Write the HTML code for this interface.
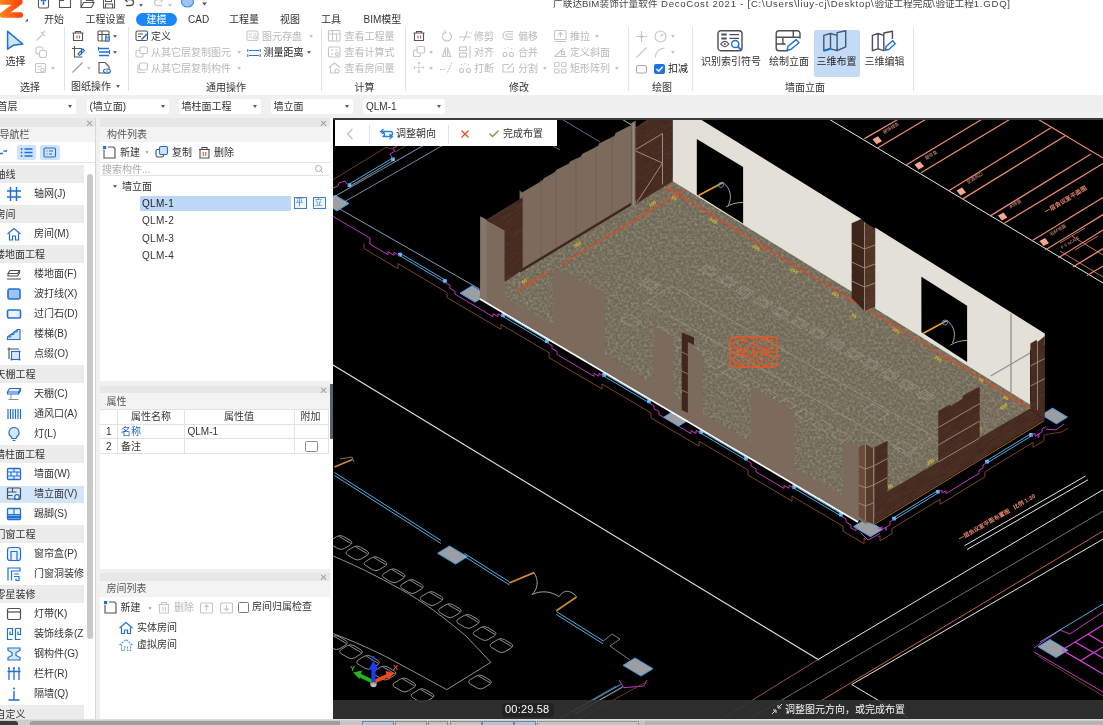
<!DOCTYPE html>
<html lang="zh-CN">
<head>
<meta charset="utf-8">
<title>广联达BIM装饰计量软件 DecoCost 2021</title>
<style>
html,body{margin:0;padding:0;}
body{width:1103px;height:725px;overflow:hidden;position:relative;background:#f0f0f0;font-family:"Liberation Sans","Noto Sans CJK SC",sans-serif;font-size:10px;color:#333;}
.a{position:absolute;}
.t{position:absolute;white-space:nowrap;font-size:10px;line-height:12px;height:12px;color:#333;filter:blur(0.35px);}
.g{color:#b9b9b9;}
.w{background:#fff;}
svg{position:absolute;overflow:visible;}
/* top */
#top{left:0;top:0;width:1103px;height:95px;background:#fff;}
.sep{position:absolute;width:1px;background:#e3e3e3;top:27px;height:64px;}
.dd{position:absolute;top:98.800px;height:15.700px;background:#fff;border-radius:2px;}
.dd span{position:absolute;left:3px;top:1px;font-size:10px;line-height:13px;white-space:nowrap;color:#333;filter:blur(0.35px);}
.dd i{position:absolute;right:4px;top:6.500px;width:0;height:0;border-left:2.500px solid transparent;border-right:2.500px solid transparent;border-top:3px solid #5a5a5a;}
.arr{position:absolute;width:0;height:0;border-left:2.5px solid transparent;border-right:2.5px solid transparent;border-top:3px solid #666;}
.arr.g{border-top-color:#c4c4c4;}
/* panels */
.ph{position:absolute;height:8.5px;background:#e7e7e7;}
.pt{position:absolute;height:16px;background:#f3f3f3;}
.x{position:absolute;width:7px;height:7px;}
.x:before,.x:after{content:"";position:absolute;left:3px;top:0.5px;width:0.8px;height:6.5px;background:#a0a0a0;}
.x:before{transform:rotate(45deg);}
.x:after{transform:rotate(-45deg);}
.nh{position:absolute;left:0;width:84px;height:18px;background:#ececec;}
.nh span,.ni span{position:absolute;white-space:nowrap;font-size:10px;line-height:12px;top:3.5px;filter:blur(0.35px);}
.ni{position:absolute;left:0;width:84px;height:20px;overflow:hidden;}
.ni span{left:34px;top:4.4px;}
.ni svg{left:6px;top:2px;}
</style>
</head>
<body>
<div id="top" class="a"></div>
<!-- title bar -->
<div class="t" style="left:553px;top:-2.500px;font-size:9.600px;color:#444;letter-spacing:0.74px;"><span style="letter-spacing:0.1px">广联达BIM装饰计量软件</span> DecoCost 2021 - [C:\Users\liuy-cj\Desktop\<span style="letter-spacing:0">验证工程完成</span>\<span style="letter-spacing:0">验证工程</span>1.GDQ]</div>
<!-- logo -->
<svg style="left:0;top:-6px" width="30" height="32" viewBox="0 0 30 32">
<defs><linearGradient id="lg" x1="0" y1="0" x2="1" y2="0"><stop offset="0" stop-color="#ff8f1c"/><stop offset="1" stop-color="#ff4310"/></linearGradient></defs>
<path d="M-3 8H19.800L2.500 21H20.300" fill="none" stroke="url(#lg)" stroke-width="5.600" stroke-linecap="round" stroke-linejoin="round"/>
<path d="M25.200 27.400h2.800v-2.800z" fill="#555"/>
</svg>
<!-- quick access -->
<svg style="left:36px;top:-4px" width="180" height="14" viewBox="0 0 180 14" fill="none" stroke="#555" stroke-width="1.1">
<rect x="2.5" y="1" width="10" height="11" rx="1.5"/><path d="M7.5 2v7M5 5l2.500 -2.600l2.500 2.600" stroke="#1f6fd6" stroke-width="1.6"/>
<path d="M23.500 4v7.500h11v-9h-4" /><path d="M23.500 1.500h4v3h-4z" fill="#555"/>
<path d="M45 11.500v-9h4l1.500 2h6.500v2M45 11.500l2.500 -5h10.500l-2.500 5z"/>
<path d="M67.500 2h9l2 2v8h-11zM69.500 2v3.500h6v-3.500M69.500 12v-4h7v4"/>
<path d="M90 9.500h4.500a3 3 0 0 0 0 -6h-5.500M91.500 1l-2.600 2.500l2.600 2.500" stroke-width="1.3"/>
<path d="M126 9.500h-4.500a3 3 0 0 1 0 -6h5.500M124.500 1l2.600 2.500l-2.600 2.500" stroke="#ccc" stroke-width="1.3"/>
<ellipse cx="151.500" cy="6" rx="6" ry="5" fill="#9cc7f5" stroke="#3d8be0"/>
<path d="M166 3.500h5" stroke-width="1.2"/><path d="M166 6.500l2.500 3l2.500 -3z" fill="#555" stroke="none"/>
</svg>
<div class="arr" style="left:139px;top:4px"></div>
<div class="arr g" style="left:168px;top:4px"></div>
<!-- tabs -->
<div class="t" style="left:44px;top:13.6px;">开始</div>
<div class="t" style="left:85.500px;top:13.6px;">工程设置</div>
<div class="a" style="left:135.500px;top:12.500px;width:41px;height:13px;border-radius:7px;background:#1787fb;"></div>
<div class="t" style="left:146.500px;top:13.6px;color:#fff;">建模</div>
<div class="t" style="left:188px;top:13.6px;">CAD</div>
<div class="t" style="left:229px;top:13.6px;">工程量</div>
<div class="t" style="left:280px;top:13.6px;">视图</div>
<div class="t" style="left:321px;top:13.6px;">工具</div>
<div class="t" style="left:363.500px;top:13.6px;">BIM模型</div>
<!-- ribbon separators -->
<div class="sep" style="left:64px"></div><div class="sep" style="left:128px"></div><div class="sep" style="left:321px"></div><div class="sep" style="left:405px"></div><div class="sep" style="left:628px"></div><div class="sep" style="left:692px"></div><div class="sep" style="left:913px"></div>
<!-- group: select -->
<svg style="left:4px;top:29px" width="22" height="24" viewBox="0 0 22 24"><path d="M3.600 2.300L18.800 15L9.300 16.300L3.600 20.100z" fill="#cfe3f8" stroke="#1b6fd0" stroke-width="1.5" stroke-linejoin="round"/></svg>
<div class="t" style="left:5.500px;top:56px;">选择</div>
<svg style="left:34px;top:29px" width="22" height="46" viewBox="0 0 22 46" fill="none" stroke="#c6c6c6" stroke-width="1.1">
<path d="M2.500 11.500l6 -6M7 3l4 4M8 5l3 -3"/>
<rect x="2" y="18" width="7" height="7" rx="2"/><rect x="5.500" y="21.500" width="7" height="7" rx="2" fill="#fff"/>
<rect x="1.500" y="34.500" width="10" height="9" rx="1"/><path d="M3.500 37.500h4M3.500 40h2"/><circle cx="8.500" cy="41" r="1.800"/>
</svg>
<div class="arr g" style="left:51px;top:67px"></div>
<div class="t" style="left:20px;top:82.1px;">选择</div>
<!-- group: drawing ops -->
<svg style="left:70px;top:29px" width="46" height="46" viewBox="0 0 46 46" fill="none" stroke="#555" stroke-width="1.1">
<path d="M2.500 4h11M5.500 4v-1.500h5v1.500M3.500 4v7.500h9v-7.500"/><path d="M7 6.500v3M9.500 6.500v3" stroke="#e05a3a"/>
<path d="M4.500 17v11h8M2 19.500h9.500v6"/><path d="M8 25l5 -5l1.500 1.500l-5 5z" stroke="#1f6fd6"/>
<path d="M2.500 43.500l10 -10" stroke="#999"/>
<rect x="28" y="2" width="11" height="10" rx="1"/><path d="M28 5.500h11M32 2v10M36 5.500v6.500"/><rect x="35.500" y="8" width="4" height="4" fill="#8fbdf0" stroke="#1f6fd6" stroke-width=".8"/>
<path d="M29 19.500h10M29 23h10M29 26.500h10" stroke="#1f6fd6" stroke-width="1.700"/><path d="M28.500 18v3.500M39.500 21v4" stroke="#1f6fd6"/>
<path d="M29 33.500h6l4 4v6.500h-10z"/><ellipse cx="37" cy="42" rx="3.500" ry="2" fill="#fff" stroke="#1f6fd6"/><circle cx="37" cy="42" r=".8" fill="#1f6fd6" stroke="none"/>
</svg>
<div class="arr g" style="left:87px;top:67px"></div>
<div class="arr" style="left:113px;top:35px"></div><div class="arr" style="left:113px;top:51px"></div>
<div class="t" style="left:71px;top:81.1px;">图纸操作</div><div class="arr" style="left:115.500px;top:85px"></div>
<!-- group: general ops -->
<svg style="left:135px;top:30px" width="14" height="12" viewBox="0 0 14 12" fill="none" stroke="#555" stroke-width="1.1"><rect x="1" y="1" width="11.500" height="9.500" rx="1.500"/><path d="M3 4h5M3 6.500h3"/><path d="M6.500 9.500l5.500 -5.500" stroke="#1f6fd6" stroke-width="1.600"/></svg>
<div class="t" style="left:151px;top:30.7px;">定义</div>
<svg style="left:135px;top:46px" width="14" height="28" viewBox="0 0 14 28" fill="none" stroke="#c6c6c6" stroke-width="1.100"><rect x="1" y="4.500" width="7" height="6.500" rx="1"/><rect x="5" y="1" width="7.500" height="6.500" rx="1" fill="#fff"/><path d="M3 18.500v8h7.500"/><rect x="4.500" y="17" width="8" height="7" rx="1.500" fill="#fff"/></svg>
<div class="t g" style="left:151px;top:47px;">从其它层复制图元</div><div class="arr g" style="left:236.500px;top:51px"></div>
<div class="t g" style="left:151px;top:63.3px;">从其它层复制构件</div><div class="arr g" style="left:236.500px;top:67px"></div>
<svg style="left:246px;top:30px" width="14" height="12" viewBox="0 0 14 12" fill="none" stroke="#c9c9c9" stroke-width="1.100"><rect x="1" y="1" width="11" height="9.500" rx="1.500"/><path d="M3 4h3M8 4h2.500M3 7h3"/><circle cx="9" cy="7.500" r="1.500"/></svg>
<div class="t g" style="left:262px;top:30.7px;">图元存盘</div><div class="arr g" style="left:308.500px;top:35px"></div>
<svg style="left:246.500px;top:47.500px" width="14" height="10" viewBox="0 0 14 10" fill="none" stroke="#2a78dc" stroke-width="1.100"><path d="M2 2.500h10M2 7.500h10"/><path d="M0.800 1v3M13.200 1v3M0.800 6v3M13.200 6v3" stroke="#555" stroke-width="0.900"/></svg>
<div class="t" style="left:263.500px;top:47px;color:#222;">测量距离</div><div class="arr" style="left:307px;top:51px"></div>
<div class="t" style="left:206px;top:82.1px;">通用操作</div>
<!-- group: calc -->
<svg style="left:327px;top:29px" width="15" height="46" viewBox="0 0 15 46" fill="none" stroke="#c6c6c6" stroke-width="1.100">
<rect x="1.500" y="1.500" width="11.500" height="10.500" rx="1"/><path d="M1.500 5h11.500M5.500 1.500v10.500M9.500 5v7"/>
<rect x="1.500" y="18" width="11.500" height="10" rx="1.500"/><path d="M4 21h2M8.500 21h2M4 25h2" /><circle cx="10" cy="25" r="1.500"/>
<path d="M2 38.500l5.500 -4.500l5.500 4.500M3.500 38v6h5"/><circle cx="10" cy="42" r="2"/>
</svg>
<div class="t g" style="left:344.500px;top:30.7px;">查看工程量</div>
<div class="t g" style="left:344.500px;top:47px;">查看计算式</div>
<div class="t g" style="left:344.500px;top:63.3px;">查看房间量</div>
<div class="t" style="left:354.500px;top:82.1px;">计算</div>
<!-- group: modify -->
<svg style="left:412px;top:29px" width="140" height="46" viewBox="0 0 140 46" fill="none" stroke="#c6c6c6" stroke-width="1.100">
<g stroke="#555"><path d="M1.500 4h11M4.500 4v-1.500h5v1.500M2.500 4v7.500h9v-7.500"/><path d="M6 6.500v3M8.500 6.500v3" stroke="#e05a3a"/></g>
<rect x="1.500" y="21" width="7" height="6.500" rx="1"/><rect x="5" y="17.500" width="7.500" height="6.500" rx="1" fill="#fff"/>
<path d="M7 33.500v10M2 38.500h10M7 33.500l-1.500 1.500M7 33.500l1.500 1.500M7 43.500l-1.500 -1.500M7 43.500l1.500 -1.500M2 38.500l1.500 -1.500M2 38.500l1.500 1.500M12 38.500l-1.500 -1.500M12 38.500l-1.500 1.500" stroke-dasharray="1.500 .8"/>
<path d="M37 3.500a4.500 4.500 0 1 1 -4 0M33 1l.5 3l-3 .5"/>
<path d="M30.500 27.500l3 -9v9zM38.500 27.500l-3 -9v9z"/>
<path d="M28 40.500h6M35.500 43.500l4.500 -10" stroke-dasharray="2 1"/>
<path d="M47 8h12M55.500 2l-4 10" /><path d="M57 4h3" stroke-dasharray="1 1"/>
<rect x="47.500" y="18" width="7" height="3.500"/><rect x="47.500" y="24" width="7" height="4"/><path d="M58 17v12"/>
<circle cx="49.500" cy="41.500" r="2"/><circle cx="56.500" cy="41.500" r="2"/><path d="M49.500 36v-1.500M56.500 36v-1.500M53 35v-1.500" stroke-dasharray="1 1"/>
<path d="M101 2.500h-6a4 4 0 0 0 0 8h6M101 5h-5.500a1.500 1.500 0 0 0 0 3h5.500"/>
<circle cx="93" cy="25.500" r="2"/><circle cx="99.500" cy="25.500" r="2"/><path d="M93 20v-1.500M99.500 20v-1.500M96 19v-1.500" stroke-dasharray="1 1"/>
<path d="M97 35.500h-6v7.500h10.500v-5M95.500 40l5.500 -5.500"/>
</svg>
<div class="arr g" style="left:428.500px;top:51px"></div><div class="arr g" style="left:428.500px;top:67px"></div>
<div class="t g" style="left:474px;top:30.7px;">修剪</div><div class="t g" style="left:474px;top:47px;">对齐</div><div class="t g" style="left:474px;top:63.3px;">打断</div>
<div class="t g" style="left:518px;top:30.7px;">偏移</div><div class="t g" style="left:518px;top:47px;">合并</div><div class="t g" style="left:518px;top:63.3px;">分割</div>
<div class="arr g" style="left:543px;top:67px"></div>
<svg style="left:553px;top:29px" width="15" height="46" viewBox="0 0 15 46" fill="none" stroke="#c6c6c6" stroke-width="1.100">
<rect x="1.500" y="1.500" width="11.500" height="9" rx="1"/><path d="M7.500 8.500v-5M5.500 5.500l2 -2l2 2M1.500 12.500h11.500"/>
<path d="M1.500 27.500h12M1.500 27.500l9 -8"/><rect x="8.500" y="22.500" width="3" height="3"/>
<rect x="1.500" y="33.500" width="4.500" height="4" rx="1"/><rect x="8.500" y="33.500" width="4.500" height="4" rx="1"/><rect x="1.500" y="40" width="4.500" height="4" rx="1"/><rect x="8.500" y="40" width="4.500" height="4" rx="1"/>
</svg>
<div class="t g" style="left:570px;top:30.7px;">推拉</div><div class="arr g" style="left:595px;top:35px"></div>
<div class="t g" style="left:570px;top:47px;">定义斜面</div>
<div class="t g" style="left:570px;top:63.3px;">矩形阵列</div><div class="arr g" style="left:615px;top:67px"></div>
<div class="t" style="left:509px;top:82.1px;">修改</div>
<!-- group: draw -->
<svg style="left:634px;top:29px" width="36" height="46" viewBox="0 0 36 46" fill="none" stroke="#c6c6c6" stroke-width="1.100">
<path d="M7.500 2v11M2 7.500h11"/><circle cx="7.500" cy="7.500" r="1" fill="#c6c6c6"/>
<circle cx="26.500" cy="7.500" r="5.500"/><path d="M26.500 7.500l2.500 -2.500"/>
<path d="M2.500 28.500l10 -10"/>
<path d="M21.500 28.500c0 -6 4 -9 9 -9.500"/>
<rect x="2.500" y="36.500" width="10" height="7.500" rx="1.500" stroke="#aaa"/>
</svg>
<div class="arr g" style="left:670.500px;top:35px"></div><div class="arr g" style="left:670.500px;top:51px"></div>
<div class="a" style="left:654px;top:64px;width:11px;height:10px;border-radius:2px;background:#1a73e8;"></div>
<svg style="left:654px;top:64px" width="11" height="10" viewBox="0 0 11 10"><path d="M2.500 5l2.200 2.200l4 -4.500" fill="none" stroke="#fff" stroke-width="1.500"/></svg>
<div class="t" style="left:668px;top:63.3px;color:#222;">扣减</div>
<div class="t" style="left:652px;top:82.1px;">绘图</div>
<!-- group: wall elevation -->
<div class="a" style="left:814px;top:29.500px;width:46px;height:47px;border-radius:2px;background:#c4dbf6;"></div>
<svg style="left:717px;top:29px" width="28" height="24" viewBox="0 0 28 24" fill="none" stroke="#4a4f58" stroke-width="1.400">
<rect x="1" y="1.700" width="24" height="20" rx="2.800"/><path d="M4.300 5.600h5.400M4.300 9.400h5.400" stroke-width="2"/><path d="M12.500 5.600h9.500M12.500 9.400h9.500" stroke-width="1.300"/><path d="M3.800 15c1.200 -1.800 2.500 -2.700 4 -2.700s2.800 .9 4 2.700c-1.200 1.800 -2.500 2.700 -4 2.700s-2.800 -.9 -4 -2.700z" stroke-width="1.200"/><circle cx="7.800" cy="15" r="1" fill="#4a4f58" stroke="none"/><circle cx="18.200" cy="15" r="3.600" fill="#fff" stroke="#1f6fd6" stroke-width="1.500"/><path d="M20.900 17.700l3.300 3.200" stroke="#1f6fd6" stroke-width="1.900"/>
</svg>
<div class="t" style="left:701px;top:56px;">识别索引符号</div>
<svg style="left:774px;top:29px" width="28" height="24" viewBox="0 0 28 24" fill="none" stroke="#4a4f58" stroke-width="1.400">
<path d="M14 21.700h-9a2.800 2.800 0 0 1 -2.800 -2.800v-14.400a2.800 2.800 0 0 1 2.800 -2.800h18.200a2.800 2.800 0 0 1 2.800 2.800v5"/><path d="M2.200 8.300h23.800M19.300 1.700v6.600M8.900 8.300v6.700M2.200 15h9.500"/><path d="M13 21.300l1 -4l8.200 -6.700l2.800 3.200l-8.200 6.700z" fill="#fff" stroke="#1f6fd6" stroke-width="1.400" stroke-linejoin="round"/>
</svg>
<div class="t" style="left:769px;top:56px;">绘制立面</div>
<svg style="left:822px;top:29px" width="26" height="24" viewBox="0 0 26 24" fill="none" stroke="#3f5878" stroke-width="1.400" stroke-linejoin="round">
<path d="M1.800 6.400L8.500 4.500V19.800L1.800 21.700zM8.500 4.500L15.100 6.400V21.700L8.500 19.800M15.100 6.400V3.600L23.700 1.700V17.900L15.100 21.700"/><path d="M1.800 21.700L8.500 19.800" stroke="#1f6fd6" stroke-width="2"/>
</svg>
<div class="t" style="left:816.500px;top:56px;color:#222;">三维布置</div>
<svg style="left:870px;top:29px" width="28" height="24" viewBox="0 0 28 24" fill="none" stroke="#4a4f58" stroke-width="1.400" stroke-linejoin="round">
<path d="M2.400 6.400L8.100 4.500V19.800L2.400 21.700zM8.100 4.500L13.800 6.400V21.700L8.100 19.800M13.800 6.400V4L22.400 2.200V10M19 2.900l3.400 -0.700"/><path d="M15.200 21.300l0.900 -3.700l6.500 -5.800l2.600 2.900l-6.500 5.800z" fill="#fff" stroke="#1f6fd6" stroke-width="1.400"/>
</svg>
<div class="t" style="left:864.500px;top:56px;">三维编辑</div>
<div class="t" style="left:785px;top:82.1px;">墙面立面</div>
<!-- dropdown bar -->
<div class="dd" style="left:-6px;width:81.500px"><span style="left:3.500px">首层</span><i></i></div>
<div class="dd" style="left:86.500px;width:82px"><span>(墙立面)</span><i></i></div>
<div class="dd" style="left:178.500px;width:82.500px"><span>墙柱面工程</span><i></i></div>
<div class="dd" style="left:270.500px;width:82px"><span>墙立面</span><i></i></div>
<div class="dd" style="left:363px;width:82px"><span>QLM-1</span><i></i></div>

<div class="a w" style="left:0;top:118px;width:96px;height:601.500px;"></div>
<div class="ph" style="left:0;top:118px;width:96px;"></div><div class="x" style="left:86px;top:119px;"></div>
<div class="pt" style="left:0;top:126.500px;width:96px;height:15.500px;"></div>
<div class="t" style="left:-0.500px;top:128.500px;color:#555;">导航栏</div>
<div class="a" style="left:0;top:162px;width:96px;height:1px;background:#e4e4e4;"></div>
<div class="a" style="left:17px;top:145px;width:19px;height:14.500px;border-radius:2px;background:#cfe4fb;"></div>
<div class="a" style="left:40px;top:145px;width:19.500px;height:14.500px;border-radius:2px;background:#cfe4fb;"></div>
<svg style="left:0;top:145px" width="60" height="15" viewBox="0 0 60 15" fill="none" stroke="#1f6fd6" stroke-width="1.300"><path d="M0 8.500h3M3.500 6h3.500" stroke="#1f6fd6"/><circle cx="21.500" cy="4" r=".9" fill="#1f6fd6" stroke="none"/><circle cx="21.500" cy="7.500" r=".9" fill="#1f6fd6" stroke="none"/><circle cx="21.500" cy="11" r=".9" fill="#1f6fd6" stroke="none"/><path d="M24.500 4h8M24.500 7.500h8M24.500 11h8"/><rect x="44" y="3" width="11.500" height="9" rx="1.200" stroke-width="1.100"/><path d="M46.500 6h1M49 6h4M46.500 9h1M49 9h3" stroke-width="1"/></svg>
<div class="nh" style="top:165px"><span style="left:-4.5px">轴线</span></div>
<div class="ni" style="top:184px;"><svg width="16" height="16" viewBox="0 0 16 16" fill="none"><path d="M4.500 1v14M10.500 1v14M1 5h14M1 11h14" stroke="#1f6fd6" stroke-width="1.500"/></svg><span>轴网(J)</span></div>
<div class="nh" style="top:205px"><span style="left:-4.5px">房间</span></div>
<div class="ni" style="top:224px;"><svg width="16" height="16" viewBox="0 0 16 16" fill="none"><path d="M1.500 8l6.500 -5.500l6.500 5.500M3.500 7.500v6.500h3v-4h3v4h3v-6.500" stroke="#1f6fd6" stroke-width="1.200"/></svg><span>房间(M)</span></div>
<div class="nh" style="top:245px"><span style="left:-5px">楼地面工程</span></div>
<div class="ni" style="top:264px;"><svg width="16" height="16" viewBox="0 0 16 16" fill="none"><path d="M4 4.500h9.500l-2 3h-9.500zM2 7.500v2.500h9.500l2 -3v-2.500M1 13h14" stroke="#4a4f58" stroke-width="1.100"/></svg><span>楼地面(F)</span></div>
<div class="ni" style="top:284px;"><svg width="16" height="16" viewBox="0 0 16 16" fill="none"><rect x="2" y="3" width="12" height="10" rx="1.500" stroke="#1f6fd6" stroke-width="1.600" fill="#9cc4f2"/></svg><span>波打线(X)</span></div>
<div class="ni" style="top:304px;"><svg width="16" height="16" viewBox="0 0 16 16" fill="none"><rect x="1.500" y="4" width="13" height="8" rx="1.500" stroke="#1f6fd6" stroke-width="1.600" fill="#eaf3fd"/></svg><span>过门石(D)</span></div>
<div class="ni" style="top:324px;"><svg width="16" height="16" viewBox="0 0 16 16" fill="none"><path d="M1.500 13.500v-2.500l10 -7.500h2.500v10z" stroke="#1f6fd6" stroke-width="1.100" fill="#d6e8fb"/><path d="M1.500 11h3.300v-2.500h3.200v-2.500h3.200v-2.500" stroke="#1f6fd6" stroke-width="1"/></svg><span>楼梯(B)</span></div>
<div class="ni" style="top:344px;"><svg width="16" height="16" viewBox="0 0 16 16" fill="none"><path d="M3 1.500v3M1.500 3h3M4.500 3h8.500M3 4.500v8.500" stroke="#4a4f58" stroke-width="1.100"/><rect x="5.500" y="5.500" width="8" height="8" stroke="#1f6fd6" stroke-width="1.100" fill="#d6e8fb"/><circle cx="5.500" cy="13.500" r="1" fill="#1f6fd6"/><circle cx="13.500" cy="13.500" r="1" fill="#1f6fd6"/><circle cx="13.500" cy="5.500" r="1" fill="#1f6fd6"/></svg><span>点缀(O)</span></div>
<div class="nh" style="top:365px"><span style="left:-4.5px">天棚工程</span></div>
<div class="ni" style="top:384px;"><svg width="16" height="16" viewBox="0 0 16 16" fill="none"><path d="M3.500 2.500h11l-2 3.500h-11zM1.500 6v2h11v-2M12.500 8l2 -3.500v-2" stroke="#1f6fd6" stroke-width="1.100" fill="#eaf3fd"/><path d="M5 8v5M2.500 13.500h10" stroke="#8a8f98" stroke-width="1"/></svg><span>天棚(C)</span></div>
<div class="ni" style="top:404px;"><svg width="16" height="16" viewBox="0 0 16 16" fill="none"><path d="M2 3v10M4.500 3v10M7 3v10M9.500 3v10M12 3v10M14.500 3v10" stroke="#1f6fd6" stroke-width="1.200"/></svg><span>通风口(A)</span></div>
<div class="ni" style="top:424px;"><svg width="16" height="16" viewBox="0 0 16 16" fill="none"><path d="M8 1.500a5 5 0 0 1 3 9l-1 2h-4l-1 -2a5 5 0 0 1 3 -9zM6.500 14.500h3" stroke="#1f6fd6" stroke-width="1.200" fill="#d6e8fb"/></svg><span>灯(L)</span></div>
<div class="nh" style="top:445px"><span style="left:-5px">墙柱面工程</span></div>
<div class="ni" style="top:464px;"><svg width="16" height="16" viewBox="0 0 16 16" fill="none"><rect x="1.500" y="2.500" width="13" height="11" rx="1" stroke="#1f6fd6" stroke-width="1.300" fill="#eaf3fd"/><path d="M1.500 6h13M1.500 10h13M8 2.500v3.500M5 6v4M11 6v4M8 10v3.500" stroke="#1f6fd6" stroke-width="1.100"/></svg><span>墙面(W)</span></div>
<div class="ni" style="top:484px;background:linear-gradient(#fff 0,#fff 2px,#d3e5fa 2px,#d3e5fa 19px,#fff 19px);"><svg width="16" height="16" viewBox="0 0 16 16" fill="none"><rect x="1.500" y="2" width="13" height="11" rx="1" stroke="#4a4f58" stroke-width="1.200"/><path d="M1.500 6h9M1.500 9.500h5M6.500 2v4" stroke="#4a4f58" stroke-width="1.100"/><circle cx="11" cy="11" r="2.300" stroke="#1f6fd6" stroke-width="1.200" fill="#fff"/><path d="M8 13.500h6" stroke="#1f6fd6" stroke-width="1.200"/></svg><span>墙立面(V)</span></div>
<div class="ni" style="top:504px;"><svg width="16" height="16" viewBox="0 0 16 16" fill="none"><rect x="1.500" y="2.500" width="13" height="11" rx="1" stroke="#1f6fd6" stroke-width="1.300" fill="#eaf3fd"/><path d="M1.500 8.500h13M8 2.500v6" stroke="#1f6fd6" stroke-width="1.100"/><path d="M2 11h12" stroke="#1f6fd6" stroke-width="3"/></svg><span>踢脚(S)</span></div>
<div class="nh" style="top:525px"><span style="left:-4.5px">门窗工程</span></div>
<div class="ni" style="top:544px;"><svg width="16" height="16" viewBox="0 0 16 16" fill="none"><rect x="1.500" y="1.500" width="13" height="13" rx="2.500" stroke="#1f6fd6" stroke-width="1.200" fill="#eaf3fd"/><path d="M5 14v-8.500h6v8.500" stroke="#1f6fd6" stroke-width="1.200"/></svg><span>窗帘盒(P)</span></div>
<div class="ni" style="top:564px;"><svg width="16" height="16" viewBox="0 0 16 16" fill="none"><path d="M2 14.500v-12.500h12v3h-8.500v9.500M8 8h5M8 10.500h5v4h-3v-2" stroke="#1f6fd6" stroke-width="1.200"/></svg><span>门窗洞装修</span></div>
<div class="nh" style="top:585px"><span style="left:-4.5px">零星装修</span></div>
<div class="ni" style="top:604px;"><svg width="16" height="16" viewBox="0 0 16 16" fill="none"><rect x="1.500" y="2.500" width="13" height="11" rx="1.500" stroke="#4a4f58" stroke-width="1.200"/><path d="M1.500 6h13" stroke="#4a4f58" stroke-width="1.200"/></svg><span>灯带(K)</span></div>
<div class="ni" style="top:624px;"><svg width="16" height="16" viewBox="0 0 16 16" fill="none"><path d="M1.500 2.500h5v6h-2.500v-3M1.500 2.500v11h5M9.500 2.500h5v6h-2.500v-3M9.500 2.500v11h5" stroke="#1f6fd6" stroke-width="1.200"/></svg><span>装饰线条(Z)</span></div>
<div class="ni" style="top:644px;"><svg width="16" height="16" viewBox="0 0 16 16" fill="none"><path d="M2 2h12v2.500l-4 2v3l4 2v2.500h-12v-2.500l4 -2v-3l-4 -2z" stroke="#1f6fd6" stroke-width="1.200" fill="#d6e8fb"/></svg><span>钢构件(G)</span></div>
<div class="ni" style="top:664px;"><svg width="16" height="16" viewBox="0 0 16 16" fill="none"><path d="M3 2v12M8 2v12M13 2v12M1.500 5.500h13" stroke="#1f6fd6" stroke-width="1.300"/><circle cx="3" cy="2" r=".9" fill="#1f6fd6"/><circle cx="8" cy="2" r=".9" fill="#1f6fd6"/><circle cx="13" cy="2" r=".9" fill="#1f6fd6"/></svg><span>栏杆(R)</span></div>
<div class="ni" style="top:684px;"><svg width="16" height="16" viewBox="0 0 16 16" fill="none"><path d="M8 5v8.500M2.500 14h11" stroke="#1f6fd6" stroke-width="1.400"/><circle cx="8" cy="2.500" r="1" fill="#1f6fd6"/></svg><span>隔墙(Q)</span></div>
<div class="nh" style="top:705px"><span style="left:-4.5px">自定义</span></div>
<div class="a" id="navborder" style="left:95px;top:118px;width:1px;height:601px;background:#d6d6d6;"></div>
<div class="a" style="left:86.500px;top:174px;width:6px;height:465px;border-radius:3px;background:#c9c9c9;"></div>

<div class="a" id="gapstrip" style="left:330px;top:118px;width:3px;height:601px;background:#fafafa;"></div>
<!-- component list panel -->
<div class="a w" style="left:99.500px;top:118px;width:230.500px;height:263px;"></div>
<div class="ph" style="left:99.500px;top:118px;width:230.500px;"></div><div class="x" style="left:320px;top:119px;"></div>
<div class="pt" style="left:99.500px;top:126.500px;width:230.500px;height:15.500px;"></div>
<div class="t" style="left:107px;top:128.500px;color:#555;">构件列表</div>
<svg style="left:102px;top:145px" width="112" height="15" viewBox="0 0 112 15" fill="none" stroke="#4a4f58" stroke-width="1.100">
<path d="M2 5v8h11v-9.500l-1.500 -1.500h-5.500"/><rect x="1" y="1" width="3.200" height="3.200" fill="#1f6fd6" stroke="none"/>
<rect x="54" y="4.500" width="7.500" height="7.500" rx="1.500"/><rect x="57.500" y="1.500" width="8" height="8" rx="1.500" fill="#cfe3f8" stroke="#1f6fd6"/>
<path d="M97 4.500h11M100 4.500v-2h5v2M98 4.500v8.500h9v-8.500"/><path d="M101.200 7v4M103.800 7v4" stroke="#e05a3a"/>
</svg>
<div class="t" style="left:120px;top:147px;">新建</div><div class="arr" style="left:144.500px;top:151px;border-top-color:#999;transform:scale(.8)"></div>
<div class="t" style="left:172px;top:147px;">复制</div>
<div class="t" style="left:214px;top:147px;">删除</div>
<div class="a" style="left:99.500px;top:162px;width:230.500px;height:1px;background:#e4e4e4;"></div>
<div class="t" style="left:102px;top:164px;color:#aaa;">搜索构件...</div>
<svg style="left:314px;top:164px" width="10" height="10" viewBox="0 0 10 10" fill="none" stroke="#aaa" stroke-width="1"><circle cx="4.500" cy="4.500" r="3"/><path d="M6.800 6.800l2.200 2.200"/></svg>
<div class="a" style="left:101px;top:175px;width:228px;height:1px;background:#e4e4e4;"></div>
<div class="arr" style="left:112.500px;top:185px;"></div>
<div class="t" style="left:122px;top:180.600px;">墙立面</div>
<div class="a" style="left:140px;top:196px;width:151px;height:14.500px;border-radius:1.500px;background:#bcd7f7;"></div>
<div class="t" style="left:142px;top:198px;color:#222;letter-spacing:0.3px;">QLM-1</div>
<div class="t" style="left:142px;top:215.300px;letter-spacing:0.3px;">QLM-2</div>
<div class="t" style="left:142px;top:232.500px;letter-spacing:0.3px;">QLM-3</div>
<div class="t" style="left:142px;top:249.700px;letter-spacing:0.3px;">QLM-4</div>
<div class="a" style="left:293.500px;top:197px;width:11.500px;height:10px;border:1px solid #3f7fd0;background:#eef5fd;box-sizing:content-box;"></div>
<div class="t" style="left:295.500px;top:196.500px;font-size:8px;color:#2d6fc4;">平</div>
<div class="a" style="left:312.500px;top:197px;width:11.500px;height:10px;border:1px solid #3f7fd0;background:#eef5fd;box-sizing:content-box;"></div>
<div class="t" style="left:314.500px;top:196.500px;font-size:8px;color:#2d6fc4;">立</div>
<!-- properties panel -->
<div class="a w" style="left:99.500px;top:385.500px;width:230.500px;height:183px;"></div>
<div class="ph" style="left:99.500px;top:385.500px;width:230.500px;height:7.500px;"></div><div class="x" style="left:320px;top:386px;"></div>
<div class="pt" style="left:99.500px;top:393px;width:230.500px;height:15.500px;"></div>
<div class="t" style="left:106.500px;top:396px;color:#555;">属性</div>
<div class="a" style="left:99.500px;top:408.500px;width:228.500px;height:1px;background:#e2e2e2;"></div>
<div class="a" style="left:99.500px;top:423.500px;width:228.500px;height:1px;background:#e2e2e2;"></div>
<div class="a" style="left:99.500px;top:438px;width:228.500px;height:1px;background:#e2e2e2;"></div>
<div class="a" style="left:99.500px;top:453px;width:228.500px;height:1px;background:#e2e2e2;"></div>
<div class="a" style="left:117px;top:408.500px;width:1px;height:45px;background:#e2e2e2;"></div>
<div class="a" style="left:184px;top:408.500px;width:1px;height:45px;background:#e2e2e2;"></div>
<div class="a" style="left:294px;top:408.500px;width:1px;height:45px;background:#e2e2e2;"></div>
<div class="a" style="left:328px;top:408.500px;width:1px;height:45px;background:#e2e2e2;"></div>
<div class="t" style="left:131px;top:410.500px;">属性名称</div>
<div class="t" style="left:224px;top:410.500px;">属性值</div>
<div class="t" style="left:300.500px;top:410.500px;">附加</div>
<div class="t" style="left:106px;top:425.500px;">1</div><div class="t" style="left:121px;top:425.500px;color:#2369c8;">名称</div><div class="t" style="left:187.500px;top:425.500px;">QLM-1</div>
<div class="t" style="left:106px;top:440.500px;">2</div><div class="t" style="left:121px;top:440.500px;">备注</div>
<div class="a" style="left:305px;top:441px;width:10.500px;height:9px;border:1px solid #8a8a8a;border-radius:1.500px;background:#fff;box-sizing:content-box;"></div>
<!-- room list panel -->
<div class="a w" style="left:99.500px;top:572.500px;width:230.500px;height:146.500px;"></div>
<div class="ph" style="left:99.500px;top:572.500px;width:230.500px;"></div><div class="x" style="left:320px;top:573px;"></div>
<div class="pt" style="left:99.500px;top:581px;width:230.500px;height:15.500px;"></div>
<div class="t" style="left:106.500px;top:582.500px;color:#555;">房间列表</div>
<svg style="left:103px;top:600px" width="135" height="15" viewBox="0 0 135 15" fill="none" stroke="#4a4f58" stroke-width="1.100">
<path d="M2 5v8h11v-9.500l-1.500 -1.500h-5.500"/><rect x="1" y="1" width="3.200" height="3.200" fill="#1f6fd6" stroke="none"/>
<g stroke="#c6c6c6"><path d="M55.500 4.500h11M58.500 4.500v-2h5v2M56.500 4.500v8.500h9v-8.500M60 7v4M62.500 7v4"/>
<rect x="97.500" y="3" width="12" height="10" rx="1"/><path d="M103.500 10.500v-5.500M101.500 7l2 -2l2 2"/>
<rect x="117.500" y="3" width="12" height="10" rx="1"/><path d="M123.500 5v5.500M121.500 8.500l2 2l2 -2"/></g>
</svg>
<div class="t" style="left:120.500px;top:601.500px;">新建</div><div class="arr" style="left:147.500px;top:607px;border-top-color:#999;transform:scale(.8)"></div>
<div class="t g" style="left:174px;top:601.500px;">删除</div>
<div class="a" style="left:237.500px;top:601.500px;width:9.500px;height:9.500px;border:1px solid #777;border-radius:1.500px;background:#fff;box-sizing:content-box;"></div>
<div class="t" style="left:252px;top:601px;">房间归属检查</div>
<svg style="left:118px;top:620px" width="16" height="32" viewBox="0 0 16 32" fill="none" stroke="#1f6fd6" stroke-width="1.200"><path d="M1.500 8l6.500 -5.500l6.500 5.500M3.500 7.500v6h3v-3.500h3v3.500h3v-6"/><path d="M1.500 25l6.500 -5.500l6.500 5.500M3.500 24.500v6h3v-3.500h3v3.500h3v-6" stroke-dasharray="2 1" stroke="#5b9be6"/></svg>
<div class="t" style="left:137px;top:621.500px;">实体房间</div>
<div class="t" style="left:137px;top:638.500px;">虚拟房间</div>
<!-- splitter handle -->
<div class="a" style="left:329.500px;top:383.500px;width:4px;height:55px;background:#59606e;"></div>

<div class="a" style="left:333px;top:117.500px;width:770px;height:602px;background:#000;overflow:hidden;">
<svg style="left:-333px;top:-117.500px" width="1103" height="725" viewBox="0 0 1103 725">
<defs>
<filter id="fl" x="0" y="0" width="100%" height="100%"><feTurbulence type="fractalNoise" baseFrequency="0.38" numOctaves="2" seed="7" result="n"/><feColorMatrix in="n" type="matrix" values="0 0 0 0 0.0  0 0 0 0 0.0  0 0 0 0 0.0  2.4 0 0 0 -0.9" result="a"/><feFlood flood-color="#8f8770"/><feComposite operator="in" in2="a"/><feComposite operator="in" in2="SourceGraphic"/></filter>
<filter id="wd" x="0" y="0" width="100%" height="100%"><feTurbulence type="fractalNoise" baseFrequency="0.06 0.8" numOctaves="2" seed="2" result="n"/><feColorMatrix in="n" type="matrix" values="0 0 0 0 0  0 0 0 0 0  0 0 0 0 0  1.1 0 0 0 -0.42" result="a"/><feFlood flood-color="#2e1c14"/><feComposite operator="in" in2="a"/><feComposite operator="in" in2="SourceGraphic"/></filter>
<filter id="b3"><feGaussianBlur stdDeviation="0.45"/></filter>
</defs>
<g filter="url(#b3)">
<polyline points="333.0,365.0 819.0,660.0" fill="none" stroke="#e6e6e6" stroke-width="1.1" />
<polyline points="818.0,659.6 1103.0,489.7" fill="none" stroke="#e6e6e6" stroke-width="1.0" />
<polyline points="818.0,659.6 780.0,683.0 722.0,719.0" fill="none" stroke="#b86a50" stroke-width="0.8" />
<polyline points="751.0,718.0 785.9,697.6 1020.0,560.0 1103.0,511.2" fill="none" stroke="#8a8a8a" stroke-width="0.8" />
<polyline points="792.4,718.0 824.0,699.0 1055.0,560.0 1103.0,531.0" fill="none" stroke="#c4603e" stroke-width="1.0" />
<polyline points="851.7,684.5 1067.0,560.0 1103.0,539.2" fill="none" stroke="#e6e6e6" stroke-width="1.0" />
<polyline points="851.7,684.5 873.7,697.6 908.0,718.0" fill="none" stroke="#e6e6e6" stroke-width="1.0" />
<polyline points="964.5,545.7 1085.5,476.0" fill="none" stroke="#e6e6e6" stroke-width="1.0" />
<polyline points="967.0,549.5 1088.0,479.8" fill="none" stroke="#e6e6e6" stroke-width="1.0" />
<text x="960" y="541" transform="rotate(-30 960 541)" font-family="Liberation Sans,Noto Sans CJK SC,sans-serif" font-size="5.800" fill="#e8866c" font-weight="bold" xml:space="preserve">一层会议室平面布置图   比例 1:30</text>
<polyline points="828.0,118.5 1103.0,283.0" fill="none" stroke="#e6e6e6" stroke-width="1.0" />
<polyline points="620.0,118.0 640.0,130.0" fill="none" stroke="#e6e6e6" stroke-width="0.8" />
<polyline points="864.5,138.6 898.6,119.0" fill="none" stroke="#ee8a70" stroke-width="1.25" />
<polyline points="878.0,147.8 928.0,118.0" fill="none" stroke="#ee8a70" stroke-width="1.25" />
<polyline points="906.5,164.8 984.0,118.0" fill="none" stroke="#ee8a70" stroke-width="1.25" />
<polyline points="921.0,172.7 1012.0,118.0" fill="none" stroke="#ee8a70" stroke-width="1.25" />
<polyline points="948.4,191.0 1050.6,128.0" fill="none" stroke="#ee8a70" stroke-width="1.25" />
<polyline points="962.8,198.9 1065.0,136.0" fill="none" stroke="#ee8a70" stroke-width="1.25" />
<polyline points="990.3,215.9 1091.0,154.0" fill="none" stroke="#ee8a70" stroke-width="1.25" />
<polyline points="1003.4,223.8 1103.0,163.5" fill="none" stroke="#ee8a70" stroke-width="1.25" />
<polyline points="1032.0,240.8 1103.0,197.5" fill="none" stroke="#ee8a70" stroke-width="1.25" />
<polyline points="1045.4,250.0 1103.0,214.6" fill="none" stroke="#ee8a70" stroke-width="1.25" />
<polyline points="1058.5,257.8 1103.0,230.0" fill="none" stroke="#ee8a70" stroke-width="1.25" />
<polyline points="1072.9,267.0 1103.0,248.6" fill="none" stroke="#ee8a70" stroke-width="1.25" />
<polyline points="1087.0,275.5 1103.0,266.0" fill="none" stroke="#ee8a70" stroke-width="1.25" />
<polyline points="1036.0,118.0 1103.0,158.0" fill="none" stroke="#ee8a70" stroke-width="1.25" />
<polygon points="872.5,139.3 878.0,136.3 882.0,141.3 876.5,144.3" fill="#f4a88e"/>
<polygon points="914.5,164.4 920.0,161.4 924.0,166.4 918.5,169.4" fill="#f4a88e"/>
<polygon points="956.5,190.4 962.0,187.4 966.0,192.4 960.5,195.4" fill="#f4a88e"/>
<polygon points="997.9,215.5 1003.4,212.5 1007.4,217.5 1001.9,220.5" fill="#f4a88e"/>
<polygon points="1039.5,241.0 1045.0,238.0 1049.0,243.0 1043.5,246.0" fill="#f4a88e"/>
<text x="884" y="134" transform="rotate(-31 884 134)" font-family="Liberation Sans,Noto Sans CJK SC,sans-serif" font-size="4.500" fill="#e8a090">装饰线条</text>
<text x="926" y="160" transform="rotate(-31 926 160)" font-family="Liberation Sans,Noto Sans CJK SC,sans-serif" font-size="4.500" fill="#e8a090">窗帘盒</text>
<text x="968" y="184" transform="rotate(-31 968 184)" font-family="Liberation Sans,Noto Sans CJK SC,sans-serif" font-size="4.500" fill="#e8a090">空调风口</text>
<text x="1010" y="209" transform="rotate(-31 1010 209)" font-family="Liberation Sans,Noto Sans CJK SC,sans-serif" font-size="4.500" fill="#e8a090">木饰面</text>
<text x="1051" y="236" transform="rotate(-31 1051 236)" font-family="Liberation Sans,Noto Sans CJK SC,sans-serif" font-size="4.500" fill="#e8a090">石材地面</text>
<text x="1046" y="214" transform="rotate(-31 1046 214)" font-family="Liberation Sans,Noto Sans CJK SC,sans-serif" font-size="6" fill="#e8866c" font-weight="bold">一层会议室平面图</text>
<polyline points="1072.0,236.0 1103.0,255.0" fill="none" stroke="#ee8a70" stroke-width="0.8" />
<polyline points="1060.0,251.0 1103.0,277.0" fill="none" stroke="#ee8a70" stroke-width="0.8" />
<polyline points="1085.0,228.0 1060.0,243.0" fill="none" stroke="#ee8a70" stroke-width="0.8" />
<polyline points="1098.0,236.0 1075.0,250.0" fill="none" stroke="#ee8a70" stroke-width="0.8" />
<text x="1062" y="249" transform="rotate(-31 1062 249)" font-family="Liberation Sans,sans-serif" font-size="4" fill="#e8a090">P  S   SCALE</text>
<polyline points="338.0,208.0 479.5,289.0" fill="none" stroke="#9fc4e8" stroke-width="0.8" />
<polyline points="400.0,253.3 445.0,279.9" fill="none" stroke="#58bef6" stroke-width="0.9" />
<polyline points="400.0,255.8 445.0,282.4" fill="none" stroke="#58bef6" stroke-width="0.9" />
<polyline points="400.0,264.8 445.0,291.4" fill="none" stroke="#8a4a2c" stroke-width="0.9" />
<rect x="398.2" y="252.7" width="3.600" height="3.600" fill="#5cc4ff"/>
<rect x="443.2" y="279.2" width="3.600" height="3.600" fill="#5cc4ff"/>
<polyline points="503.0,314.1 547.0,340.0" fill="none" stroke="#58bef6" stroke-width="0.9" />
<polyline points="503.0,316.6 547.0,342.5" fill="none" stroke="#58bef6" stroke-width="0.9" />
<polyline points="503.0,325.6 547.0,351.5" fill="none" stroke="#8a4a2c" stroke-width="0.9" />
<rect x="501.2" y="313.5" width="3.600" height="3.600" fill="#5cc4ff"/>
<rect x="545.2" y="339.4" width="3.600" height="3.600" fill="#5cc4ff"/>
<polyline points="604.0,373.7 649.0,400.2" fill="none" stroke="#58bef6" stroke-width="0.9" />
<polyline points="604.0,376.2 649.0,402.7" fill="none" stroke="#58bef6" stroke-width="0.9" />
<polyline points="604.0,385.2 649.0,411.7" fill="none" stroke="#8a4a2c" stroke-width="0.9" />
<rect x="602.2" y="373.1" width="3.600" height="3.600" fill="#5cc4ff"/>
<rect x="647.2" y="399.6" width="3.600" height="3.600" fill="#5cc4ff"/>
<polyline points="701.0,430.9 746.0,457.4" fill="none" stroke="#58bef6" stroke-width="0.9" />
<polyline points="701.0,433.4 746.0,459.9" fill="none" stroke="#58bef6" stroke-width="0.9" />
<polyline points="701.0,442.4 746.0,468.9" fill="none" stroke="#8a4a2c" stroke-width="0.9" />
<rect x="699.2" y="430.3" width="3.600" height="3.600" fill="#5cc4ff"/>
<rect x="744.2" y="456.8" width="3.600" height="3.600" fill="#5cc4ff"/>
<polyline points="794.0,485.8 841.0,513.5" fill="none" stroke="#58bef6" stroke-width="0.9" />
<polyline points="794.0,488.3 841.0,516.0" fill="none" stroke="#58bef6" stroke-width="0.9" />
<polyline points="794.0,497.3 841.0,525.0" fill="none" stroke="#8a4a2c" stroke-width="0.9" />
<rect x="792.2" y="485.2" width="3.600" height="3.600" fill="#5cc4ff"/>
<rect x="839.2" y="512.9" width="3.600" height="3.600" fill="#5cc4ff"/>
<polyline points="333.0,216.3 370.0,238.1 370.0,244.1 388.0,254.7 388.0,251.7 394.0,255.3 394.0,252.3 400.0,255.8" fill="none" stroke="#c236c2" stroke-width="1.0" />
<polyline points="364.0,243.6 364.0,248.6 398.0,268.6 398.0,263.6 400.0,264.8" fill="none" stroke="#8a4a2c" stroke-width="0.9" />
<polyline points="445.0,282.4 450.0,285.3 450.0,288.3 455.0,291.2 455.0,294.2 493.0,316.7 493.0,313.7 498.0,316.6 498.0,313.6 503.0,316.6" fill="none" stroke="#c236c2" stroke-width="1.0" />
<polyline points="445.0,291.4 447.0,292.5 447.0,297.5 501.0,329.4 501.0,324.4 503.0,325.6" fill="none" stroke="#8a4a2c" stroke-width="0.9" />
<polyline points="547.0,342.5 552.0,345.5 552.0,348.5 557.0,351.4 557.0,354.4 594.0,376.3 594.0,373.3 599.0,376.2 599.0,373.2 604.0,376.2" fill="none" stroke="#c236c2" stroke-width="1.0" />
<polyline points="547.0,351.5 549.0,352.7 549.0,357.7 602.0,389.0 602.0,384.0 604.0,385.2" fill="none" stroke="#8a4a2c" stroke-width="0.9" />
<polyline points="649.0,402.7 654.0,405.7 654.0,408.7 659.0,411.6 659.0,414.6 691.0,433.5 691.0,430.5 696.0,433.4 696.0,430.4 701.0,433.4" fill="none" stroke="#c236c2" stroke-width="1.0" />
<polyline points="649.0,411.7 651.0,412.9 651.0,417.9 699.0,446.2 699.0,441.2 701.0,442.4" fill="none" stroke="#8a4a2c" stroke-width="0.9" />
<polyline points="746.0,459.9 751.0,462.9 751.0,465.9 756.0,468.8 756.0,471.8 784.0,488.4 784.0,485.4 789.0,488.3 789.0,485.3 794.0,488.3" fill="none" stroke="#c236c2" stroke-width="1.0" />
<polyline points="746.0,468.9 748.0,470.1 748.0,475.1 792.0,501.1 792.0,496.1 794.0,497.3" fill="none" stroke="#8a4a2c" stroke-width="0.9" />
<polyline points="841.0,516.0 846.0,518.9 846.0,521.9 851.0,524.9 851.0,527.9 856.0,530.8 856.0,527.8 861.0,530.8 861.0,527.8 866.0,530.7" fill="none" stroke="#c236c2" stroke-width="1.0" />
<polyline points="841.0,525.0 843.0,526.2 843.0,531.2 864.0,543.6 864.0,538.6 866.0,539.7" fill="none" stroke="#8a4a2c" stroke-width="0.9" />
<polygon points="323.0,202.5 337.0,210.9 349.0,203.5 335.0,195.1" fill="#9b9ea3" stroke="#3f9be8" stroke-width="0.9"/>
<polygon points="460.0,293.2 475.0,302.2 487.0,294.8 472.0,285.8" fill="#9b9ea3" stroke="#3f9be8" stroke-width="0.9"/>
<polygon points="663.5,417.2 678.5,426.2 690.5,418.8 675.5,409.8" fill="#9b9ea3" stroke="#3f9be8" stroke-width="0.9"/>
<polygon points="853.5,526.6 870.5,536.8 882.5,529.4 865.5,519.2" fill="#9b9ea3" stroke="#3f9be8" stroke-width="0.9"/>
<polygon points="1041.5,414.9 1056.5,423.9 1067.5,417.1 1052.5,408.1" fill="#9b9ea3" stroke="#3f9be8" stroke-width="0.9"/>
<polygon points="1038.0,646.8 1056.0,657.6 1068.0,650.2 1050.0,639.4" fill="#9b9ea3" stroke="#3f9be8" stroke-width="0.9"/>
<polyline points="335.5,196.0 420.0,147.4 470.0,118.0" fill="none" stroke="#9fc4e8" stroke-width="0.8" />
<polyline points="344.0,202.0 400.0,170.0 490.0,118.0" fill="none" stroke="#9fc4e8" stroke-width="0.7" />
<polyline points="349.0,184.2 392.6,158.1" fill="none" stroke="#58bef6" stroke-width="0.9" />
<polyline points="350.0,186.2 393.6,160.1" fill="none" stroke="#58bef6" stroke-width="0.9" />
<rect x="347.7" y="183.4" width="3.600" height="3.600" fill="#5cc4ff"/>
<rect x="391.2" y="157.4" width="3.600" height="3.600" fill="#5cc4ff"/>
<polyline points="333.0,188.0 338.0,186.0 339.0,183.0 345.0,181.0 347.0,184.0 349.5,185.0" fill="none" stroke="#c236c2" stroke-width="1.0" />
<polyline points="393.0,159.0 390.0,154.0 395.0,151.0 393.0,148.0 400.0,144.0" fill="none" stroke="#c236c2" stroke-width="1.0" />
<polyline points="333.0,179.7 386.0,147.4 392.0,149.0 412.0,137.0 445.0,118.0" fill="none" stroke="#8a4a2c" stroke-width="0.8" />
<polyline points="351.6,186.0 393.8,162.6" fill="none" stroke="#8a4a2c" stroke-width="0.8" />
<polyline points="395.0,152.0 425.0,134.5" fill="none" stroke="#7a7a7a" stroke-width="0.6" />
<polyline points="560.0,118.0 600.0,142.0" fill="none" stroke="#8899aa" stroke-width="0.7" />
<polyline points="505.0,118.0 560.0,150.0" fill="none" stroke="#8899aa" stroke-width="0.7" />
<polyline points="334.5,472.5 441.0,540.5" fill="none" stroke="#58bef6" stroke-width="0.9" />
<polyline points="334.5,475.5 441.0,543.5" fill="none" stroke="#58bef6" stroke-width="0.9" />
<polyline points="334.5,467.0 352.4,459.6" fill="none" stroke="#d08a2a" stroke-width="1.6" />
<polyline points="340.0,459.0 352.0,457.0 354.0,462.0" fill="none" stroke="#aaa" stroke-width="0.7" />
<polygon points="437.5,553.3 455.5,564.1 467.5,556.7 449.5,545.9" fill="#9b9ea3" stroke="#3f9be8" stroke-width="0.9"/>
<polyline points="464.5,553.5 509.3,581.8" fill="none" stroke="#58bef6" stroke-width="0.9" />
<polyline points="464.5,556.5 509.3,584.8" fill="none" stroke="#58bef6" stroke-width="0.9" />
<polyline points="509.3,583.0 534.0,572.6" fill="none" stroke="#d08a2a" stroke-width="1.8" />
<polyline points="556.4,610.7 576.5,597.0" fill="none" stroke="#d08a2a" stroke-width="1.8" />
<path d="M534 572.600c5 8 4 16 -2 22c8 -4 18 -4 27 2c4 -6 10 -8 17.500 0" fill="none" stroke="#c8c8c8" stroke-width="0.800"/>
<polyline points="556.4,611.5 603.4,641.0" fill="none" stroke="#58bef6" stroke-width="0.9" />
<polyline points="556.4,614.5 603.4,644.0" fill="none" stroke="#58bef6" stroke-width="0.9" />
<polyline points="603.4,641.0 612.0,634.0 620.0,639.0 610.0,646.0 630.0,660.0" fill="none" stroke="#b0b0b0" stroke-width="0.7" />
<polygon points="623.0,665.3 641.0,676.1 653.0,668.7 635.0,657.9" fill="#9b9ea3" stroke="#3f9be8" stroke-width="0.9"/>
<polyline points="619.0,680.0 623.6,687.7 643.8,686.0 647.0,680.0" fill="none" stroke="#c236c2" stroke-width="1.0" />
<polyline points="647.0,681.5 578.6,719.0" fill="none" stroke="#8a4a2c" stroke-width="0.8" />
<polyline points="622.0,688.0 575.0,714.0" fill="none" stroke="#8a4a2c" stroke-width="0.8" />
<polyline points="620.5,684.6 572.4,712.0" fill="none" stroke="#58bef6" stroke-width="0.9" />
<polyline points="623.0,686.6 575.0,714.0" fill="none" stroke="#58bef6" stroke-width="0.9" />
<polyline points="616.0,686.0 560.0,718.0" fill="none" stroke="#8899aa" stroke-width="0.7" />
<g fill="none" stroke="#b4b4b4" stroke-width="0.800">
<path d="M333 556C362 568 388 582 409 594C432 608 452 624 466.500 636.500L490.800 662.300L446.800 689.600L393.700 660.800C372 649 350 640 333 633.500"/>
<rect x="-8" y="-7.5" width="16" height="15.0" rx="4" transform="matrix(0.86 0.51 0.85 -0.53 340.6 542.5)" vector-effect="non-scaling-stroke"/>
<path d="M-7 5.0h14" transform="matrix(0.86 0.51 0.85 -0.53 340.6 542.5)" vector-effect="non-scaling-stroke"/>
<rect x="-8" y="-7.5" width="16" height="15.0" rx="4" transform="matrix(0.86 0.51 0.85 -0.53 357.3 553.0)" vector-effect="non-scaling-stroke"/>
<path d="M-7 5.0h14" transform="matrix(0.86 0.51 0.85 -0.53 357.3 553.0)" vector-effect="non-scaling-stroke"/>
<rect x="-8" y="-7.5" width="16" height="15.0" rx="4" transform="matrix(0.86 0.51 0.85 -0.53 375.5 563.7)" vector-effect="non-scaling-stroke"/>
<path d="M-7 5.0h14" transform="matrix(0.86 0.51 0.85 -0.53 375.5 563.7)" vector-effect="non-scaling-stroke"/>
<rect x="-8" y="-7.5" width="16" height="15.0" rx="4" transform="matrix(0.86 0.51 0.85 -0.53 393.7 575.8)" vector-effect="non-scaling-stroke"/>
<path d="M-7 5.0h14" transform="matrix(0.86 0.51 0.85 -0.53 393.7 575.8)" vector-effect="non-scaling-stroke"/>
<rect x="-8" y="-7.5" width="16" height="15.0" rx="4" transform="matrix(0.86 0.51 0.85 -0.53 411.9 586.5)" vector-effect="non-scaling-stroke"/>
<path d="M-7 5.0h14" transform="matrix(0.86 0.51 0.85 -0.53 411.9 586.5)" vector-effect="non-scaling-stroke"/>
<rect x="-8" y="-7.5" width="16" height="15.0" rx="4" transform="matrix(0.86 0.51 0.85 -0.53 431.6 598.6)" vector-effect="non-scaling-stroke"/>
<path d="M-7 5.0h14" transform="matrix(0.86 0.51 0.85 -0.53 431.6 598.6)" vector-effect="non-scaling-stroke"/>
<rect x="-8" y="-7.5" width="16" height="15.0" rx="4" transform="matrix(0.86 0.51 0.85 -0.53 449.8 610.7)" vector-effect="non-scaling-stroke"/>
<path d="M-7 5.0h14" transform="matrix(0.86 0.51 0.85 -0.53 449.8 610.7)" vector-effect="non-scaling-stroke"/>
<rect x="-8" y="-7.5" width="16" height="15.0" rx="4" transform="matrix(0.86 0.51 0.85 -0.53 468.0 621.4)" vector-effect="non-scaling-stroke"/>
<path d="M-7 5.0h14" transform="matrix(0.86 0.51 0.85 -0.53 468.0 621.4)" vector-effect="non-scaling-stroke"/>
<rect x="-8" y="-7.5" width="16" height="15.0" rx="4" transform="matrix(0.86 0.51 0.85 -0.53 484.7 633.5)" vector-effect="non-scaling-stroke"/>
<path d="M-7 5.0h14" transform="matrix(0.86 0.51 0.85 -0.53 484.7 633.5)" vector-effect="non-scaling-stroke"/>
<rect x="-8" y="-7.5" width="16" height="15.0" rx="4" transform="matrix(0.86 0.51 0.85 -0.53 501.4 645.6)" vector-effect="non-scaling-stroke"/>
<path d="M-7 5.0h14" transform="matrix(0.86 0.51 0.85 -0.53 501.4 645.6)" vector-effect="non-scaling-stroke"/>
<rect x="-8" y="-7.5" width="16" height="15.0" rx="4" transform="matrix(0.86 0.51 0.85 -0.53 336.0 642.6)" vector-effect="non-scaling-stroke"/>
<path d="M-7 5.0h14" transform="matrix(0.86 0.51 0.85 -0.53 336.0 642.6)" vector-effect="non-scaling-stroke"/>
<rect x="-8" y="-7.5" width="16" height="15.0" rx="4" transform="matrix(0.86 0.51 0.85 -0.53 351.0 651.7)" vector-effect="non-scaling-stroke"/>
<path d="M-7 5.0h14" transform="matrix(0.86 0.51 0.85 -0.53 351.0 651.7)" vector-effect="non-scaling-stroke"/>
<rect x="-8" y="-7.5" width="16" height="15.0" rx="4" transform="matrix(0.86 0.51 0.85 -0.53 368.0 662.3)" vector-effect="non-scaling-stroke"/>
<path d="M-7 5.0h14" transform="matrix(0.86 0.51 0.85 -0.53 368.0 662.3)" vector-effect="non-scaling-stroke"/>
<rect x="-8" y="-7.5" width="16" height="15.0" rx="4" transform="matrix(0.86 0.51 0.85 -0.53 384.6 673.0)" vector-effect="non-scaling-stroke"/>
<path d="M-7 5.0h14" transform="matrix(0.86 0.51 0.85 -0.53 384.6 673.0)" vector-effect="non-scaling-stroke"/>
<rect x="-8" y="-7.5" width="16" height="15.0" rx="4" transform="matrix(0.86 0.51 0.85 -0.53 404.3 685.0)" vector-effect="non-scaling-stroke"/>
<path d="M-7 5.0h14" transform="matrix(0.86 0.51 0.85 -0.53 404.3 685.0)" vector-effect="non-scaling-stroke"/>
<rect x="-8" y="-7.5" width="16" height="15.0" rx="4" transform="matrix(0.86 0.51 0.85 -0.53 422.5 695.7)" vector-effect="non-scaling-stroke"/>
<path d="M-7 5.0h14" transform="matrix(0.86 0.51 0.85 -0.53 422.5 695.7)" vector-effect="non-scaling-stroke"/>
<rect x="-8" y="-7.5" width="16" height="15.0" rx="4" transform="matrix(0.86 0.51 0.85 -0.53 480.0 682.0)" vector-effect="non-scaling-stroke"/>
<path d="M-7 5.0h14" transform="matrix(0.86 0.51 0.85 -0.53 480.0 682.0)" vector-effect="non-scaling-stroke"/>
</g>
<g><circle cx="373.500" cy="684" r="3.200" fill="#b8b8b8"/><path d="M373.500 682L359 675" stroke="#22b422" stroke-width="3.800"/><path d="M362 670.500l-9 2l6.500 6.500z" fill="#22b422"/><path d="M373.500 682L388 675.500" stroke="#f04a1a" stroke-width="3.800"/><path d="M385.500 671l9 2l-6.500 6.500z" fill="#f04a1a"/><path d="M373.500 682V668" stroke="#1a3cf0" stroke-width="4.200"/><path d="M368.500 669.500l5 -8.500l5 8.500z" fill="#1a3cf0"/><text x="350" y="671" font-family="Liberation Sans,sans-serif" font-size="8" fill="#22b422" font-weight="bold">Y</text><text x="393" y="670" font-family="Liberation Sans,sans-serif" font-size="8" fill="#f04a1a" font-weight="bold">X</text><text x="371" y="661" font-family="Liberation Sans,sans-serif" font-size="7" fill="#1a3cf0" font-weight="bold">Z</text></g>
<polyline points="1034.0,648.0 1060.0,630.0 1070.0,634.0 1103.0,612.0" fill="none" stroke="#c236c2" stroke-width="1.0" />
<polyline points="1034.0,652.0 1103.0,692.0" fill="none" stroke="#c236c2" stroke-width="1.0" />
<polyline points="1040.0,642.0 1103.0,604.0" fill="none" stroke="#58bef6" stroke-width="0.9" />
<polyline points="1038.0,656.0 1103.0,696.0" fill="none" stroke="#8a4a2c" stroke-width="0.8" />
<polyline points="1062.0,650.0 1103.0,674.0" fill="none" stroke="#e040e0" stroke-width="1.2" />
<polyline points="1075.0,642.0 1103.0,658.0" fill="none" stroke="#e040e0" stroke-width="1.2" />
<polyline points="1088.0,634.0 1103.0,643.0" fill="none" stroke="#e040e0" stroke-width="1.2" />
<polyline points="1062.0,650.0 1103.0,625.0" fill="none" stroke="#e040e0" stroke-width="1.2" />
<polyline points="1080.0,661.0 1103.0,647.0" fill="none" stroke="#e040e0" stroke-width="1.2" />
<polyline points="894.0,517.4 938.0,490.5" fill="none" stroke="#58bef6" stroke-width="0.9" />
<polyline points="894.0,519.9 938.0,493.0" fill="none" stroke="#58bef6" stroke-width="0.9" />
<polyline points="894.0,527.4 938.0,500.5" fill="none" stroke="#8a4a2c" stroke-width="0.9" />
<rect x="892.2" y="516.8" width="3.600" height="3.600" fill="#5cc4ff"/>
<rect x="936.2" y="489.9" width="3.600" height="3.600" fill="#5cc4ff"/>
<polyline points="987.0,460.5 1031.0,433.7" fill="none" stroke="#58bef6" stroke-width="0.9" />
<polyline points="987.0,463.0 1031.0,436.2" fill="none" stroke="#58bef6" stroke-width="0.9" />
<polyline points="987.0,470.5 1031.0,443.7" fill="none" stroke="#8a4a2c" stroke-width="0.9" />
<rect x="985.2" y="459.9" width="3.600" height="3.600" fill="#5cc4ff"/>
<rect x="1029.2" y="433.1" width="3.600" height="3.600" fill="#5cc4ff"/>
<polyline points="878.0,529.1 882.0,526.7 882.0,529.7 886.0,527.3 886.0,530.3 886.0,530.3 886.0,527.3 890.0,524.8 890.0,521.8 894.0,519.4" fill="none" stroke="#c236c2" stroke-width="1.0" />
<polyline points="878.0,537.1 880.0,535.9 880.0,540.9 892.0,533.6 892.0,528.6 894.0,527.4" fill="none" stroke="#8a4a2c" stroke-width="0.9" />
<polyline points="938.0,492.5 942.0,490.0 942.0,493.0 946.0,490.6 946.0,493.6 979.0,473.4 979.0,470.4 983.0,468.0 983.0,465.0 987.0,462.5" fill="none" stroke="#c236c2" stroke-width="1.0" />
<polyline points="938.0,500.5 940.0,499.3 940.0,504.3 985.0,476.8 985.0,471.8 987.0,470.5" fill="none" stroke="#8a4a2c" stroke-width="0.9" />
<polyline points="1031.0,435.7 1035.0,433.2 1035.0,436.2 1039.0,433.8 1039.0,436.8 1038.0,437.4 1038.0,434.4 1042.0,431.9 1042.0,428.9 1046.0,426.5" fill="none" stroke="#c236c2" stroke-width="1.0" />
<polyline points="1031.0,443.7 1033.0,442.4 1033.0,447.4 1044.0,440.7 1044.0,435.7 1046.0,434.5" fill="none" stroke="#8a4a2c" stroke-width="0.9" />
<polyline points="1046.0,434.5 1062.0,432.0 1068.0,428.0" fill="none" stroke="#8a4a2c" stroke-width="0.8" />
<polyline points="861.0,533.0 868.0,540.0 880.0,533.5" fill="none" stroke="#c236c2" stroke-width="1.0" />
<polyline points="1046.0,429.0 1056.0,430.0 1064.0,424.0" fill="none" stroke="#c236c2" stroke-width="1.0" />
</g>
<g filter="url(#b3)">
<polygon points="479.0,296.5 673.0,177.5 1036.0,405.0 866.0,524.0" fill="#6e6758" />
<polygon points="479.0,296.5 673.0,177.5 1036.0,405.0 866.0,524.0" fill="#000" filter="url(#fl)"/>
<g fill="none" stroke="#a9a396" stroke-width="0.9" opacity="0.6">
<polygon points="699.5,270.2 710.5,276.8 718.5,271.8 707.5,265.2" stroke-linejoin="round"/>
<polygon points="703.0,270.4 710.0,274.7 715.0,271.6 708.0,267.3" stroke-linejoin="round"/>
<polygon points="717.6,280.6 728.6,287.2 736.6,282.2 725.6,275.6" stroke-linejoin="round"/>
<polygon points="721.1,280.8 728.1,285.1 733.1,281.9 726.1,277.7" stroke-linejoin="round"/>
<polygon points="735.7,291.0 746.7,297.6 754.7,292.6 743.7,286.0" stroke-linejoin="round"/>
<polygon points="739.2,291.2 746.2,295.5 751.2,292.4 744.2,288.1" stroke-linejoin="round"/>
<polygon points="753.8,301.4 764.8,308.0 772.8,303.0 761.8,296.4" stroke-linejoin="round"/>
<polygon points="757.3,301.6 764.3,305.9 769.3,302.8 762.3,298.5" stroke-linejoin="round"/>
<polygon points="771.9,311.8 782.9,318.4 790.9,313.4 779.9,306.8" stroke-linejoin="round"/>
<polygon points="775.4,312.1 782.4,316.3 787.4,313.2 780.4,308.9" stroke-linejoin="round"/>
<polygon points="790.0,322.2 801.0,328.8 809.0,323.8 798.0,317.2" stroke-linejoin="round"/>
<polygon points="793.5,322.4 800.5,326.7 805.5,323.6 798.5,319.3" stroke-linejoin="round"/>
<polygon points="808.1,332.6 819.1,339.2 827.1,334.2 816.1,327.6" stroke-linejoin="round"/>
<polygon points="811.6,332.8 818.6,337.1 823.6,333.9 816.6,329.7" stroke-linejoin="round"/>
<polygon points="826.2,343.0 837.2,349.6 845.2,344.6 834.2,338.0" stroke-linejoin="round"/>
<polygon points="829.7,343.2 836.7,347.5 841.7,344.4 834.7,340.1" stroke-linejoin="round"/>
<polygon points="844.3,353.4 855.3,360.0 863.3,355.0 852.3,348.4" stroke-linejoin="round"/>
<polygon points="847.8,353.6 854.8,357.9 859.8,354.8 852.8,350.5" stroke-linejoin="round"/>
<polygon points="862.4,363.8 873.4,370.4 881.4,365.4 870.4,358.8" stroke-linejoin="round"/>
<polygon points="865.9,364.1 872.9,368.3 877.9,365.2 870.9,360.9" stroke-linejoin="round"/>
<polygon points="880.5,374.2 891.5,380.8 899.5,375.8 888.5,369.2" stroke-linejoin="round"/>
<polygon points="884.0,374.4 891.0,378.7 896.0,375.6 889.0,371.3" stroke-linejoin="round"/>
<polygon points="898.6,384.6 909.6,391.2 917.6,386.2 906.6,379.6" stroke-linejoin="round"/>
<polygon points="902.1,384.8 909.1,389.1 914.1,385.9 907.1,381.7" stroke-linejoin="round"/>
<polygon points="916.7,395.0 927.7,401.6 935.7,396.6 924.7,390.0" stroke-linejoin="round"/>
<polygon points="920.2,395.2 927.2,399.5 932.2,396.4 925.2,392.1" stroke-linejoin="round"/>
<polygon points="672.0,286.0 934.0,436.6 908.0,452.8 646.0,302.1" stroke-linejoin="round"/>
<polygon points="639.1,283.7 651.1,290.9 660.1,285.3 648.1,278.1" stroke-linejoin="round"/>
<polygon points="642.6,284.0 650.6,288.8 656.6,285.0 648.6,280.2" stroke-linejoin="round"/>
<polygon points="620.9,320.2 632.9,327.4 641.9,321.8 629.9,314.6" stroke-linejoin="round"/>
<polygon points="650.5,331.2 661.5,337.8 669.5,332.8 658.5,326.2" stroke-linejoin="round"/>
<polygon points="668.6,341.6 679.6,348.2 687.6,343.2 676.6,336.6" stroke-linejoin="round"/>
<polygon points="686.7,352.0 697.7,358.6 705.7,353.6 694.7,347.0" stroke-linejoin="round"/>
<polygon points="704.8,362.4 715.8,369.0 723.8,364.0 712.8,357.4" stroke-linejoin="round"/>
<polygon points="722.9,372.8 733.9,379.4 741.9,374.4 730.9,367.8" stroke-linejoin="round"/>
<polygon points="741.0,383.2 752.0,389.8 760.0,384.8 749.0,378.2" stroke-linejoin="round"/>
<polygon points="759.1,393.6 770.1,400.2 778.1,395.2 767.1,388.6" stroke-linejoin="round"/>
<polygon points="777.2,404.0 788.2,410.6 796.2,405.6 785.2,399.0" stroke-linejoin="round"/>
<polygon points="795.3,414.4 806.3,421.0 814.3,416.0 803.3,409.4" stroke-linejoin="round"/>
<polygon points="813.4,424.8 824.4,431.4 832.4,426.4 821.4,419.8" stroke-linejoin="round"/>
<polygon points="831.5,435.2 842.5,441.8 850.5,436.8 839.5,430.2" stroke-linejoin="round"/>
<polygon points="893.0,446.9 907.0,455.3 917.0,449.1 903.0,440.7" stroke-linejoin="round"/>
<polygon points="863.0,410.3 879.0,419.9 889.0,413.7 873.0,404.1" stroke-linejoin="round"/>
</g>
<g fill="none" stroke="#f0541e" stroke-width="1.3"><rect x="730" y="337" width="47" height="30" rx="3"/><path d="M753.500 337v30M730 352h47"/><ellipse cx="741.500" cy="344.500" rx="8" ry="5"/><ellipse cx="765" cy="344.500" rx="8" ry="5"/><ellipse cx="741.500" cy="359.500" rx="8" ry="5"/><ellipse cx="765" cy="359.500" rx="8" ry="5"/><path d="M735 348l12 -7M759 348l12 -7M735 363l12 -7M759 363l12 -7" stroke-width="0.9"/></g>
<g fill="none" stroke="#e2491f" stroke-width="1.1">
<path d="M515.500 291L551 270.500M561 264.500L683 190.500M666 187L1029 408"/>
<path d="M526 279l5 7M528 285l7 -4M643 209l5 6M664.500 191.500l5 -3M677 188l4 5M688 197l-3 5M766.500 245l-3 5M805 268.500l-3 5M851.500 297l-3 5M892.500 322l-3 5M949.500 357l-3 5M994.500 384l-3 5M1019.500 399l-3 5" stroke-width="0.900"/>
</g>
<g font-family="Liberation Sans,sans-serif" font-size="4.600" fill="#e2c624" font-weight="bold">
<text x="523" y="284" transform="rotate(-31 523 284)">60</text>
<text x="575" y="248" transform="rotate(-31 575 248)">300</text>
<text x="650" y="207" transform="rotate(-31 650 207)">150</text>
<text x="671" y="198" transform="rotate(31 671 198)">55</text>
<text x="709" y="220" transform="rotate(31 709 220)">225</text>
<text x="752" y="247" transform="rotate(31 752 247)">255</text>
<text x="790" y="270" transform="rotate(31 790 270)">255</text>
<text x="831" y="294" transform="rotate(31 831 294)">255</text>
<text x="851" y="316" transform="rotate(31 851 316)">55</text>
<text x="892" y="330" transform="rotate(31 892 330)">255</text>
<text x="934" y="358" transform="rotate(31 934 358)">255</text>
<text x="978" y="380" transform="rotate(31 978 380)">55</text>
<text x="1003" y="398" transform="rotate(31 1003 398)">60</text>
<text x="1001" y="410" transform="rotate(-31 1001 410)">495</text>
<text x="978" y="432" transform="rotate(-31 978 432)">60</text>
<text x="928" y="465" transform="rotate(-31 928 465)">255</text>
<text x="889" y="489" transform="rotate(-31 889 489)">60</text>
<text x="680" y="392" transform="rotate(31 680 392)">60</text>
</g>
<polygon points="519.6,271.0 519.6,190.0 522.0,192.5 528.0,189.0 542.7,180.3 543.5,178.5 555.0,172.0 556.0,170.0 569.0,163.5 570.0,161.5 581.0,156.5 582.0,154.0 598.0,146.0 599.0,143.5 614.4,136.0 615.5,133.0 631.5,125.0 631.5,205.5" fill="#7b6a5b" />
<path d="M541 258.0v-78" stroke="#6f5e50" stroke-width="1" opacity="0.7"/>
<path d="M556 248.7v-78" stroke="#6f5e50" stroke-width="1" opacity="0.7"/>
<path d="M576 236.4v-78" stroke="#6f5e50" stroke-width="1" opacity="0.7"/>
<path d="M596 224.0v-78" stroke="#6f5e50" stroke-width="1" opacity="0.7"/>
<path d="M612 214.2v-78" stroke="#6f5e50" stroke-width="1" opacity="0.7"/>
<polyline points="519.6,271.5 632.0,203.5" fill="none" stroke="#3c261b" stroke-width="2.6" />
<polygon points="486.5,219.5 522.6,197.4 522.6,269.5 504.7,282.0 504.7,230.5" fill="#4c3026" />
<g transform="rotate(-31)"><polygon points="304.0,438.7 346.3,438.4 309.2,500.2 287.4,501.7 313.9,457.5" fill="#000" filter="url(#wd)"/></g>
<polygon points="635.6,127.4 651.0,117.0 672.8,117.0 672.8,181.2 635.6,204.3" fill="#4c3026" />
<g transform="rotate(-31)"><polygon points="479.2,436.6 497.8,435.6 516.4,446.8 483.4,501.8 439.6,502.5" fill="#000" filter="url(#wd)"/></g>
<polygon points="631.4,123.0 635.6,120.5 635.6,204.5 631.4,207.0" fill="#86756a" />
<g fill="none" stroke="#9d8b7e" stroke-width="1"><path d="M635.600 149.700L662.500 133.500V184.500M635.600 151L662.500 163L636.500 203M633.500 124v82"/></g>
<polygon points="672.8,117.0 696.8,117.0 862.0,219.5 862.0,298.0 672.8,181.2" fill="#e3e1d7" />
<polygon points="696.8,139.0 743.1,167.1 743.1,223.4 696.8,194.4" fill="#000" />
<g fill="none"><path d="M698.500 195.500L723 182.500" stroke="#e8a020" stroke-width="1.600"/><circle cx="721" cy="185" r="2.500" stroke="#3aa0f0" stroke-width="0.900"/><path d="M723 182.500c8 6 9 15 5.500 22.500M726 207c5 -3 10 -4.500 17 -4.500" stroke="#b8b8b8" stroke-width="0.900"/></g>
<polygon points="851.7,223.2 861.5,219.0 864.5,222.0 864.5,310.9 851.7,298.0" fill="#40281f" />
<g transform="rotate(31)"><polygon points="845.0,-247.3 851.2,-256.0 855.4,-255.0 901.1,-178.8 883.5,-183.2" fill="#000" filter="url(#wd)"/></g>
<polygon points="864.5,222.0 875.2,228.8 875.2,306.6 864.5,310.9" fill="#573a2c" />
<g transform="rotate(-22)"><polygon points="718.4,529.7 725.8,540.0 696.6,612.1 685.1,612.1" fill="#000" filter="url(#wd)"/></g>
<g fill="none" stroke="#a08d80" stroke-width="0.900"><path d="M864.500 222v89M851.700 243l12.800 6l10.700 -4M851.700 262l12.800 6l10.700 -4M851.700 281l12.800 6l10.700 -4"/></g>
<polygon points="875.2,227.5 1044.8,333.5 1044.8,345.0 1030.0,350.0 1030.0,404.5 875.2,308.5" fill="#e3e1d7" />
<polygon points="921.4,276.7 967.1,305.7 967.1,362.1 921.4,332.2" fill="#000" />
<g fill="none"><path d="M923 333.500L947 320.500" stroke="#e8a020" stroke-width="1.600"/><circle cx="945" cy="322.500" r="2.500" stroke="#3aa0f0" stroke-width="0.900"/><path d="M947 320.500c8 6 9 15 5.500 22.500M950.500 345c5 -3 10 -4.500 16.500 -4.500" stroke="#b8b8b8" stroke-width="0.900"/></g>
<g fill="none" stroke="#8f8f8f" stroke-width="1.300"><path d="M1011 313.500v79M990.700 376L1030 353"/></g>
<polygon points="1030.4,343.5 1036.5,340.0 1037.5,342.0 1044.8,336.0 1044.8,420.0 1030.4,409.0" fill="#4c3026" />
<g transform="rotate(-30)"><polygon points="720.6,812.7 727.6,812.7 727.5,814.9 736.8,813.4 694.8,886.1 687.9,869.4" fill="#000" filter="url(#wd)"/></g>
<g fill="none" stroke="#a08d80" stroke-width="0.900"><path d="M1030.400 366l14.400 -7.500M1030.400 386l14.400 -7.500M1037.500 342v68"/></g>
<polygon points="874.3,499.1 1029.8,408.7 1044.2,419.7 874.3,523.4" fill="#4c3026" />
<g transform="rotate(-31)"><polygon points="492.4,878.1 672.2,880.7 678.9,897.6 479.9,898.9" fill="#000" filter="url(#wd)"/></g>
<polyline points="874.3,524.4 1044.2,420.7" fill="none" stroke="#a8642c" stroke-width="1" />
<polygon points="938.3,410.9 950.0,404.5 951.0,406.0 962.0,399.0 963.0,395.5 979.7,386.6 979.7,437.8 938.3,461.9" fill="#4c3026" />
<g transform="rotate(-31)"><polygon points="592.7,835.5 606.0,836.0 606.1,837.8 619.1,837.5 621.8,835.0 640.7,836.0 614.3,879.9 566.4,879.2" fill="#000" filter="url(#wd)"/></g>
<g fill="none" stroke="#a08d80" stroke-width="0.900"><path d="M938.300 427.500L979.700 403.500M938.300 445L979.700 421M938.300 462L979.700 438"/></g>
<polygon points="480.3,282.2 858.6,505.4 858.6,521.4 480.3,298.2" fill="#7b6a5b" />
<polygon points="480.3,216.5 504.7,230.5 504.7,312.6 480.3,298.2" fill="#7b6a5b" />
<polygon points="480.3,216.5 486.5,219.5 486.5,301.8 480.3,298.2" fill="#86756a" />
<polygon points="553.0,268.0 605.0,292.0 605.0,371.8 553.0,341.1" fill="#7b6a5b" />
<polygon points="653.5,326.0 673.5,337.0 673.5,412.2 653.5,400.4" fill="#7b6a5b" />
<polygon points="688.0,341.0 702.8,356.6 702.8,429.5 688.0,420.7" fill="#7b6a5b" />
<polygon points="750.9,386.0 794.3,410.9 794.3,483.4 750.9,457.8" fill="#7b6a5b" />
<polygon points="843.0,440.4 858.6,446.6 858.6,521.4 843.0,512.2" fill="#7b6a5b" />
<polygon points="681.7,332.3 694.0,337.5 694.0,345.0 687.9,342.0 687.9,413.0 681.7,410.0" fill="#40281f" />
<g fill="none" stroke="#9a8678" stroke-width="0.800"><path d="M681.700 352l6.200 3M681.700 371l6.200 3M681.700 390l6.200 3"/></g>
<polygon points="858.8,447.3 865.4,444.0 865.4,521.2 858.8,516.8" fill="#6a4c3c" />
<polygon points="865.4,444.0 873.2,448.4 874.3,524.5 865.4,521.2" fill="#573a2c" />
<polygon points="874.3,447.3 887.5,440.7 887.5,493.4 874.3,501.1" fill="#4c3026" />
<g transform="rotate(-31)"><polygon points="519.0,833.7 533.8,834.8 506.6,880.0 491.4,879.8" fill="#000" filter="url(#wd)"/></g>
<g fill="none" stroke="#a08d80" stroke-width="0.900"><path d="M865.400 444v77M873.700 448v76M858.800 466l6.600 3l8 -3l1 -0.500l13.200 -7M858.800 485l6.600 3l8 -3l1 -0.500l13.200 -7M858.800 503l6.600 3l8 -3"/></g>
<polyline points="480.0,299.0 858.0,522.0" fill="none" stroke="#fff" stroke-width="1.8" />
</g>
</svg>
<div class="a" style="left:0;top:0;width:770px;height:2px;background:#3c3c3c;"></div>
<!-- floating toolbar -->
<div class="a w" style="left:2.200px;top:2.400px;width:221.400px;height:26.600px;"></div>
<svg style="left:0.500px;top:1px" width="230" height="30" viewBox="0 0 230 30" fill="none">
<path d="M18.500 10l-5 5l5 5" stroke="#bdbdbd" stroke-width="1.200"/>
<path d="M35.500 6v19M114.500 6v19" stroke="#e2e2e2" stroke-width="1"/>
<path d="M47 12.500h9.500a2 2 0 0 1 0 4h-1M58 17.500h-9.500a2 2 0 0 0 0 -4" stroke="#2f7fe0" stroke-width="1.400"/><path d="M49.500 10l-3 2.500l3 2.500M55.500 15l3 2.500l-3 2.500" stroke="#2f7fe0" stroke-width="1.200"/>
<path d="M127.500 11.500l7 7M134.500 11.500l-7 7" stroke="#e8502a" stroke-width="1.400"/>
<path d="M155.500 14.500l3 3l6 -6" stroke="#6f9a4a" stroke-width="1.300"/>
</svg>
<div class="t" style="left:63px;top:10.300px;">调整朝向</div>
<div class="t" style="left:170px;top:10.300px;">完成布置</div>
<!-- status bar -->
<div class="a" style="left:0;top:582.500px;width:770px;height:19.500px;background:rgba(50,50,50,0.9);"></div>
<div class="a" style="left:168.500px;top:585px;width:52px;height:14px;border-radius:2px;background:#222;"></div>
<div class="t" style="left:172px;top:585.500px;font-size:11px;line-height:13px;color:#fff;letter-spacing:0.2px;">00:29.58</div>
<svg style="left:437.500px;top:585.500px" width="12" height="12" viewBox="0 0 12 12" fill="none" stroke="#ddd" stroke-width="1"><path d="M1 11l3.500 -3.500M2 7h3v3M11 1l-3.500 3.500M7 2v3h3"/></svg>
<div class="t" style="left:452px;top:586px;color:#f4f4f4;">调整图元方向，或完成布置</div>

</div>

<div class="a" style="left:0;top:719.500px;width:1103px;height:6px;background:#cdcdcd;"></div>
<div class="a" style="left:0;top:719px;width:1103px;height:1px;background:#dedede;"></div>
<div class="a" style="left:-4px;top:721.300px;width:22px;height:8px;border-radius:3px;background:#3a3a3a;"></div>
<div class="a" style="left:29.500px;top:721.300px;width:620px;height:8px;border-radius:3px 0 0 0;background:#9e9e9e;"></div>
<div class="a" style="left:340px;top:721.300px;width:305px;height:6px;background:#c4c4c4;"></div>
<div class="a" style="left:362px;top:721.300px;width:30px;height:6px;border:1px solid #6d86a8;background:#b9c4d2;"></div>
<div class="a" style="left:395px;top:721.300px;width:30px;height:6px;border:1px solid #8a8a8a;background:#c4c4c4;"></div>
<div class="a" style="left:428px;top:721.300px;width:18px;height:6px;border:1px solid #8a8a8a;background:#c4c4c4;"></div>
<div class="a" style="left:450px;top:721.300px;width:30px;height:6px;border:1px solid #8a8a8a;background:#c4c4c4;"></div>
<div class="a" style="left:482px;top:721.300px;width:30px;height:6px;border:1px solid #6d86a8;background:#b9c4d2;"></div>
<div class="a" style="left:514px;top:721.300px;width:20px;height:6px;border:1px solid #6d86a8;background:#b9c4d2;"></div>
<div class="a" style="left:537px;top:721.300px;width:100px;height:6px;border:1px solid #999;background:#c4c4c4;"></div>
<div class="a" style="left:645px;top:720.500px;width:458px;height:6px;background:#b4b4b4;"></div>

</body>
</html>
